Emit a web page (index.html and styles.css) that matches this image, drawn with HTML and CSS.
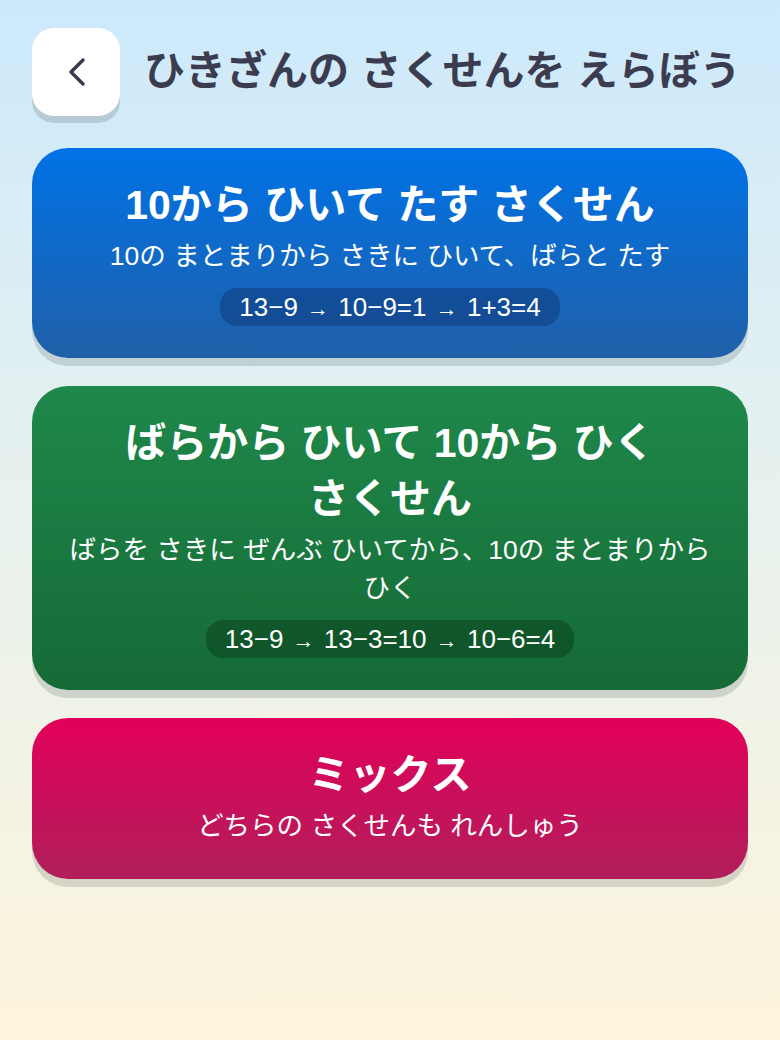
FILE: index.html
```html
<!DOCTYPE html>
<html lang="ja">
<head>
<meta charset="utf-8">
<title>ひきざんの さくせんを えらぼう</title>
<link rel="stylesheet" href="styles.css">
</head>
<body>
<div class="page">
  <header class="header">
    <button class="back" aria-label="もどる">
      <svg width="28" height="28" viewBox="0 0 28 28" aria-hidden="true">
        <path d="M21 2 L9 14 L21 26" fill="none" stroke="#3a3a4e" stroke-width="3.4" stroke-linecap="round" stroke-linejoin="round"/>
      </svg>
    </button>
    <h1 class="title">ひきざんの さくせんを えらぼう</h1>
  </header>

  <section class="card card-blue">
    <h2 class="card-title">10から ひいて たす さくせん</h2>
    <p class="card-sub">10の まとまりから さきに ひいて、ばらと たす</p>
    <div class="pill">13−9 <span class="arrow">→</span> 10−9=1 <span class="arrow">→</span> 1+3=4</div>
  </section>

  <section class="card card-green">
    <h2 class="card-title">ばらから ひいて 10から ひく さくせん</h2>
    <p class="card-sub">ばらを さきに ぜんぶ ひいてから、10の まとまりから ひく</p>
    <div class="pill">13−9 <span class="arrow">→</span> 13−3=10 <span class="arrow">→</span> 10−6=4</div>
  </section>

  <section class="card card-pink">
    <h2 class="card-title">ミックス</h2>
    <p class="card-sub">どちらの さくせんも れんしゅう</p>
  </section>
</div>
</body>
</html>
```

FILE: styles.css
```css
html, body {
  margin: 0;
  padding: 0;
}
body {
  width: 780px;
  min-height: 1040px;
  background: linear-gradient(180deg, #cce9fc 0%, #e6f1ef 45%, #fdf4dc 100%);
  font-family: "Liberation Sans", "Noto Sans CJK JP", sans-serif;
}
.page {
  padding: 28px 32px 0 32px;
  display: flex;
  flex-direction: column;
  gap: 28px;
}
.header {
  display: flex;
  align-items: center;
  gap: 24px;
  margin-bottom: 4px;
}
.back {
  width: 88px;
  height: 88px;
  flex: none;
  border: none;
  border-radius: 22px;
  background: #ffffff;
  box-shadow: 0 7px 0 #b6cbd5;
  display: flex;
  align-items: center;
  justify-content: center;
  padding: 0;
  margin: 0;
}
.title {
  margin: 0;
  font-size: 41px;
  font-weight: 700;
  color: #3c3c50;
  line-height: 1.2;
  white-space: nowrap;
}
.card {
  border-radius: 36px;
  padding: 29px 28px 32px 28px;
  display: flex;
  flex-direction: column;
  align-items: center;
  text-align: center;
  color: #ffffff;
  box-shadow: 0 8px 0 rgba(40, 60, 60, 0.17);
  word-break: keep-all;
}
.card-blue {
  background: linear-gradient(180deg, #0072e6 0%, #2060a8 100%);
}
.card-green {
  background: linear-gradient(180deg, #1f884b 0%, #156a35 100%);
}
.card-pink {
  background: linear-gradient(180deg, #e2005a 0%, #b01f5a 100%);
  padding-bottom: 34px;
}
.card-title {
  margin: 0;
  font-size: 41px;
  font-weight: 700;
  line-height: 56px;
}
.card-sub {
  margin: 4px 0 0 0;
  font-size: 26.5px;
  font-weight: 400;
  line-height: 38px;
}
.pill {
  margin-top: 13px;
  height: 38px;
  line-height: 38px;
  padding: 0 19px;
  border-radius: 17px;
  background: rgba(0, 0, 0, 0.22);
  font-size: 26px;
  white-space: nowrap;
}
.card-blue .pill {
  background: rgba(10, 40, 100, 0.38);
}
.card-green .pill {
  background: rgba(0, 30, 10, 0.3);
}
.arrow {
  font-size: 22px;
  margin: 0 2px;
}
```
